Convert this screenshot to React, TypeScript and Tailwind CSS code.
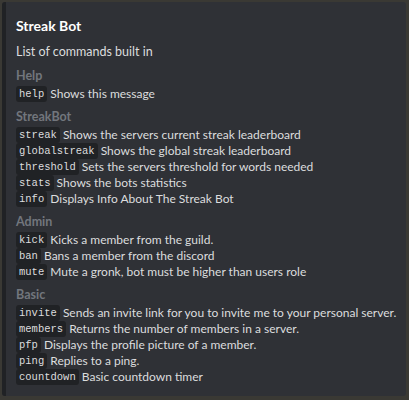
import React from 'react';

type Cmd = { name: string; desc: string };
type Section = { title: string; cmds: Cmd[] };

const sections: Section[] = [
  { title: 'Help', cmds: [{ name: 'help', desc: 'Shows this message' }] },
  {
    title: 'StreakBot',
    cmds: [
      { name: 'streak', desc: 'Shows the servers current streak leaderboard' },
      { name: 'globalstreak', desc: 'Shows the global streak leaderboard' },
      { name: 'threshold', desc: 'Sets the servers threshold for words needed' },
      { name: 'stats', desc: 'Shows the bots statistics' },
      { name: 'info', desc: 'Displays Info About The Streak Bot' },
    ],
  },
  {
    title: 'Admin',
    cmds: [
      { name: 'kick', desc: 'Kicks a member from the guild.' },
      { name: 'ban', desc: 'Bans a member from the discord' },
      { name: 'mute', desc: 'Mute a gronk, bot must be higher than users role' },
    ],
  },
  {
    title: 'Basic',
    cmds: [
      { name: 'invite', desc: 'Sends an invite link for you to invite me to your personal server.' },
      { name: 'members', desc: 'Returns the number of members in a server.' },
      { name: 'pfp', desc: 'Displays the profile picture of a member.' },
      { name: 'ping', desc: 'Replies to a ping.' },
      { name: 'countdown', desc: 'Basic countdown timer' },
    ],
  },
];

function Code({ children }: { children: React.ReactNode }) {
  return (
    <code className="inline-block rounded-[3px] bg-[#202225] px-[3px] align-top text-[10.5px] leading-[16px] text-[#dcddde] [font-family:'Liberation_Mono',monospace]">
      {children}
    </code>
  );
}

export default function App() {
  return (
    <div className="h-[400px] w-[409px] bg-[#3a3934] p-[2px] pr-[3px] pb-[4px]">
      <div className="flex h-full rounded-[3px] bg-[#2f3136] [font-family:'Lato',sans-serif]">
        <div className="w-[4px] shrink-0 rounded-l-[3px] bg-[#202225]" />
        <div className="flex-1 pl-[10px] pt-[15px]">
          <div className="text-[14px] font-bold leading-[18px] text-white">Streak Bot</div>
          <div className="mt-[9px] text-[12.5px] leading-[16px] text-[#dcddde]">List of commands built in</div>
          {sections.map((s, i) => (
            <div key={s.title} className={i === 0 ? 'mt-[8px]' : 'mt-[7px]'}>
              <div className="mb-[2px] text-[12.5px] font-bold leading-[16px] text-[#72767d]">{s.title}</div>
              {s.cmds.map((c) => (
                <div key={c.name} className="h-[16px] text-[12px] leading-[16px] whitespace-nowrap text-[#dcddde]">
                  <Code>{c.name}</Code> {c.desc}
                </div>
              ))}
            </div>
          ))}
        </div>
      </div>
    </div>
  );
}
